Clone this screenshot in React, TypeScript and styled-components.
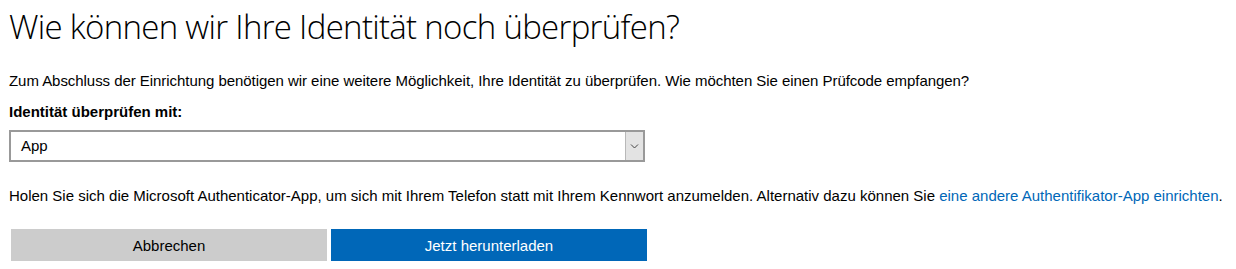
import styled, { createGlobalStyle } from "styled-components";

const GlobalStyle = createGlobalStyle`
  body {
    margin: 0;
    background: #fff;
    color: #000;
    font-family: "Segoe UI", "Liberation Sans", Arial, sans-serif;
  }
`;

const Page = styled.div`
  width: 1236px;
  height: 269px;
  padding: 0 0 0 9px;
  box-sizing: border-box;
  overflow: hidden;
`;

const Title = styled.h1`
  margin: 0;
  padding-top: 5px;
  font-family: "Open Sans", sans-serif;
  font-weight: 300;
  font-size: 33px;
  line-height: 44px;
  letter-spacing: -0.7px;
  color: #000;
`;

const Text = styled.p`
  margin: 0;
  font-size: 15px;
  line-height: 20px;
`;

const Intro = styled(Text)`
  margin-top: 22px;
  letter-spacing: -0.05px;
`;

const Label = styled.label`
  display: block;
  margin-top: 11px;
  font-size: 15px;
  line-height: 20px;
  font-weight: 600;
`;

const SelectBox = styled.div`
  margin-top: 8px;
  width: 636px;
  height: 32px;
  box-sizing: border-box;
  border: 2px solid #999;
  display: flex;
  align-items: stretch;
`;

const SelectValue = styled.span`
  flex: 1;
  padding-left: 10px;
  font-size: 15px;
  line-height: 28px;
`;

const Arrow = styled.span`
  width: 17px;
  background: #e3e3e3;
  border-left: 1px solid #b8b8b8;
  display: flex;
  align-items: center;
  justify-content: center;
`;

const Info = styled(Text)`
  margin-top: 24px;
`;

const Link = styled.a`
  color: #0067b8;
  text-decoration: none;
`;

const Buttons = styled.div`
  display: flex;
  gap: 4px;
  margin-top: 23px;
  padding-left: 2px;
`;

const Button = styled.button<{ primary?: boolean }>`
  width: 316px;
  height: 32px;
  border: none;
  font-family: inherit;
  font-size: 15px;
  background: ${(p) => (p.primary ? "#0067b8" : "#cccccc")};
  color: ${(p) => (p.primary ? "#fff" : "#000")};
`;

export default function App() {
  return (
    <Page>
      <GlobalStyle />
      <Title>Wie können wir Ihre Identität noch überprüfen?</Title>
      <Intro>
        Zum Abschluss der Einrichtung benötigen wir eine weitere Möglichkeit, Ihre Identität zu
        überprüfen. Wie möchten Sie einen Prüfcode empfangen?
      </Intro>
      <Label>Identität überprüfen mit:</Label>
      <SelectBox>
        <SelectValue>App</SelectValue>
        <Arrow>
          <svg width="9" height="6" viewBox="0 0 9 6">
            <path d="M1 1.5l3.5 3.5L8 1.5" fill="none" stroke="#444" strokeWidth="1" />
          </svg>
        </Arrow>
      </SelectBox>
      <Info>
        Holen Sie sich die Microsoft Authenticator-App, um sich mit Ihrem Telefon statt mit Ihrem
        Kennwort anzumelden. Alternativ dazu können Sie{" "}
        <Link href="#">eine andere Authentifikator-App einrichten</Link>.
      </Info>
      <Buttons>
        <Button>Abbrechen</Button>
        <Button primary>Jetzt herunterladen</Button>
      </Buttons>
    </Page>
  );
}
